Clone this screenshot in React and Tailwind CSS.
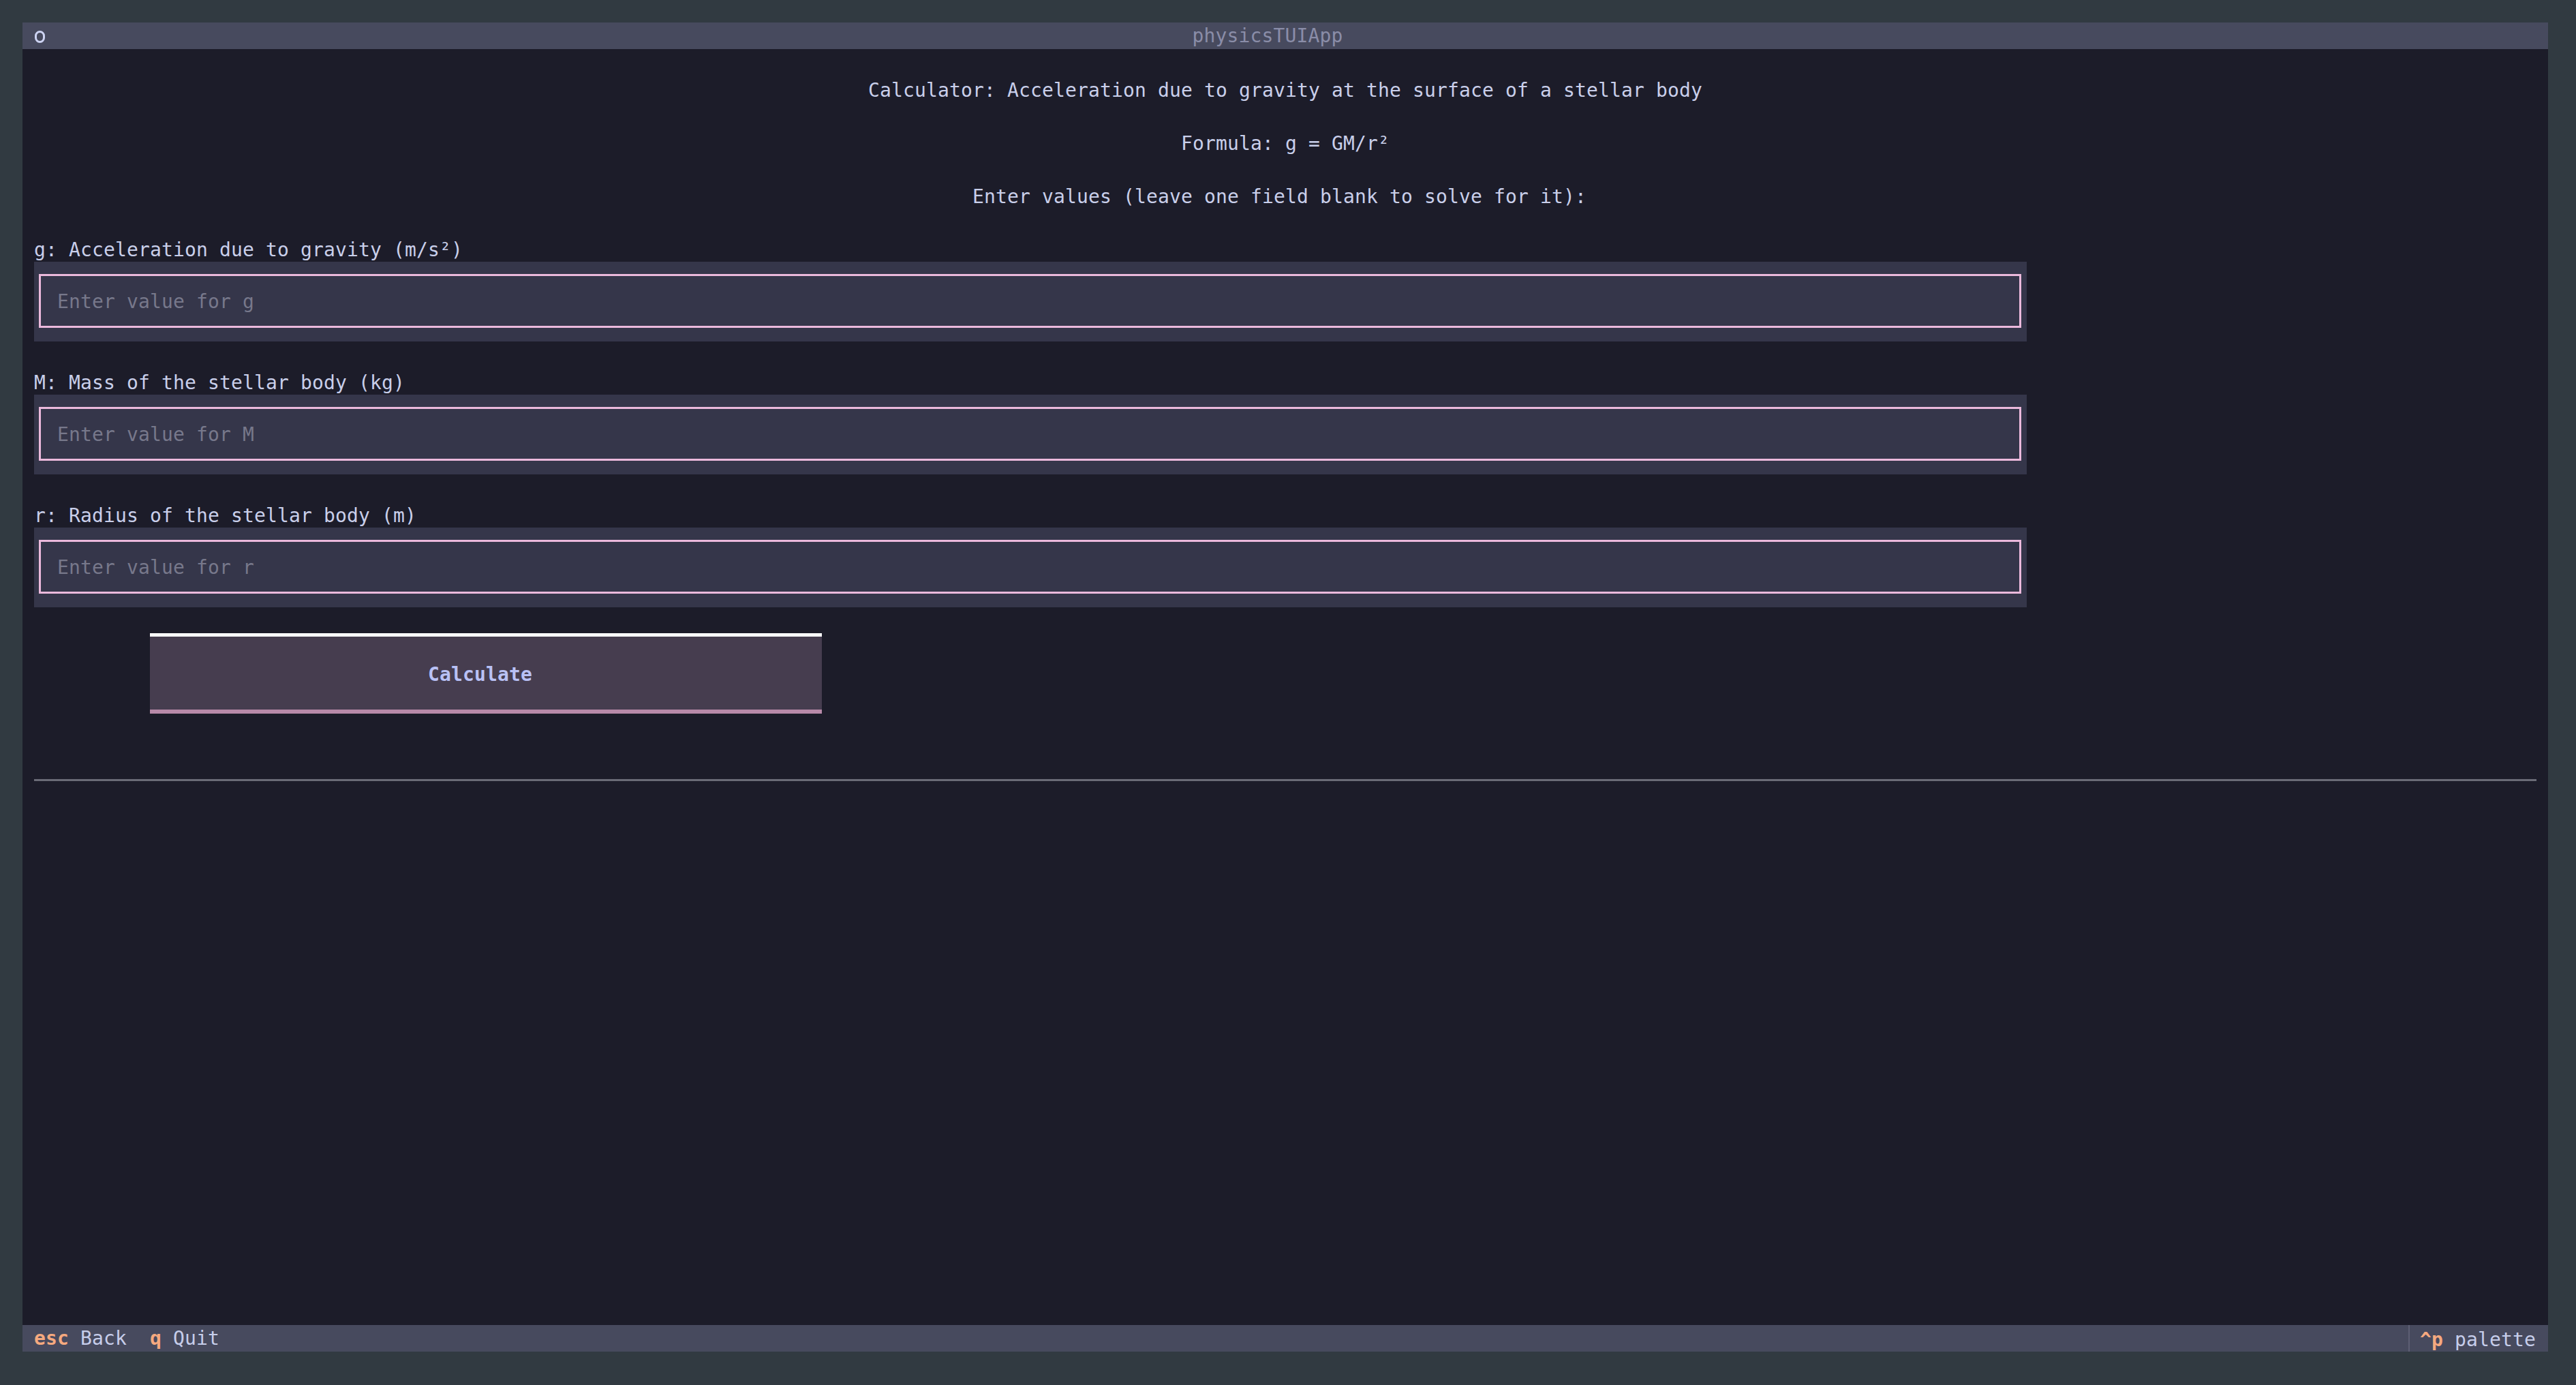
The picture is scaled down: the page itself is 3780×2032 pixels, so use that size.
import React from "react";

function Row({ children, className = "" }) {
    return (
        <div className={`h-[39px] leading-[43px] whitespace-pre ${className}`}>
            {children}
        </div>
    );
}

function Field({ label, placeholder }) {
    return (
        <>
            <Row className="text-[#c9cfea]">{label}</Row>
            <div className="w-[2924px] h-[117px] bg-[#35364a] pl-[7px] pr-[8px] pt-[18px] pb-[20px]">
                <div className="h-full border-[3px] border-[#ebb9dc] bg-[#35364a] flex items-center pl-[24px] pt-[3px] text-[#77788b]">
                    {placeholder}
                </div>
            </div>
            <Row />
        </>
    );
}

export default function App() {
    return (
        <div
            className="w-[3780px] h-[2032px] bg-[#313a41] pt-[33px] pl-[33px] text-[28px] tracking-[0.14px]"
            style={{ fontFamily: '"DejaVu Sans Mono", "Liberation Mono", monospace' }}
        >
            <div className="w-[3706px] h-[1950px] bg-[#1c1c29] flex flex-col">
                {/* header */}
                <div className="h-[39px] bg-[#474a5e] flex items-center">
                    <div className="w-[34px] pl-[18px] pt-[3px] flex items-center">
                        <span className="inline-block w-[15px] h-[18px] rounded-full border-[3px] border-[#cdd3f2]" />
                    </div>
                    <div className="flex-1 text-center pr-[86px] text-[#8a8da8] leading-[43px]">
                        physicsTUIApp
                    </div>
                </div>

                {/* body */}
                <div className="flex-1 flex flex-col px-[17px]">
                    <Row />
                    <Row className="text-center text-[#c9cfea]">
                        Calculator: Acceleration due to gravity at the surface of a stellar body
                    </Row>
                    <Row />
                    <Row className="text-center text-[#c9cfea]">Formula: g = GM/r²</Row>
                    <Row />
                    <Row className="text-center pr-[17px] text-[#c9cfea]">
                        Enter values (leave one field blank to solve for it):
                    </Row>
                    <Row />
                    <Field label="g: Acceleration due to gravity (m/s²)" placeholder="Enter value for g" />
                    <Field label="M: Mass of the stellar body (kg)" placeholder="Enter value for M" />
                    <Field label="r: Radius of the stellar body (m)" placeholder="Enter value for r" />

                    <button className="ml-[170px] -mt-[1px] w-[986px] h-[118px] bg-[#463d4f] border-t-[5px] border-t-white border-b-[6px] border-b-[#b88aa9] font-bold text-[#b9c1f5] flex items-center justify-center pr-[17px] pt-[4px]">
                        Calculate
                    </button>

                    <div className="mt-[96px] w-[3672px] h-[3px] bg-[#6a6b76]" />
                </div>

                {/* footer */}
                <div className="h-[39px] bg-[#474a5e] flex items-center leading-[43px] whitespace-pre">
                    <div className="flex-1 pl-[17px]">
                        <span className="font-bold text-[#f5a97f]">esc</span>
                        <span className="text-[#c6cdea]"> Back  </span>
                        <span className="font-bold text-[#f5a97f]">q</span>
                        <span className="text-[#c6cdea]"> Quit</span>
                    </div>
                    <div className="h-full border-l-2 border-[#5d5f74] pl-[15px] pr-[18px]">
                        <span className="font-bold text-[#f5a97f]">^p</span>
                        <span className="text-[#c6cdea]"> palette</span>
                    </div>
                </div>
            </div>
        </div>
    );
}
